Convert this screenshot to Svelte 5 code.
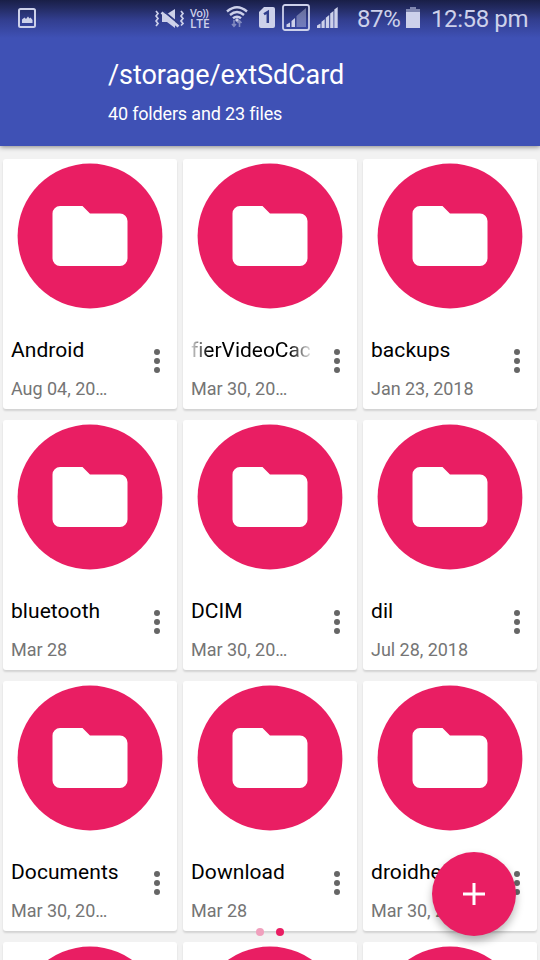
<script>
  const items = [
    { name: 'Android', date: 'Aug 04, 20…' },
    { name: 'fierVideoCac', date: 'Mar 30, 20…', scrolling: true },
    { name: 'backups', date: 'Jan 23, 2018' },
    { name: 'bluetooth', date: 'Mar 28' },
    { name: 'DCIM', date: 'Mar 30, 20…' },
    { name: 'dil', date: 'Jul 28, 2018' },
    { name: 'Documents', date: 'Mar 30, 20…' },
    { name: 'Download', date: 'Mar 28' },
    { name: 'droidhen', date: 'Mar 30, 20…' },
    { name: '', date: '' },
    { name: '', date: '' },
    { name: '', date: '' }
  ];
</script>

<div class="screen">
  <header>
    <div class="status">
      <svg class="photo" width="18" height="20" viewBox="0 0 18 20">
        <rect x="1" y="1" width="16" height="18" rx="1.5" fill="none" stroke="currentColor" stroke-width="2" />
        <path d="M4 15v-3.500L6.500 9.500 8 11l2-2.500 1.500 2 1-1L14.500 12v3z" fill="currentColor" />
      </svg>
      <svg class="mute" width="30" height="20" viewBox="0 0 30 20" fill="currentColor">
        <path d="M7 5h5l8-5v19l-8-6H7z" />
        <path d="M9 2.500L24 15" stroke="#303c84" stroke-width="1.800" />
        <path d="M6.500 3.500L23.500 17.500" stroke="currentColor" stroke-width="2.800" />
        <path d="M1 2l2 2.500L1 7l2 2.500L1 12l2 2.500-2 2.500M26 2l2 2.500-2 2.500 2 2.500-2 2.500 2 2.500-2 2" fill="none" stroke="currentColor" stroke-width="1.700" />
      </svg>
      <div class="volte"><span>Vo))</span><span>LTE</span></div>
      <svg class="wifi" width="22" height="23" viewBox="0 0 22 23" fill="none" stroke="currentColor" stroke-width="2.400">
        <path d="M1 5.500Q11-3 21 5.500M4 9Q11 3 18 9M7 12.300Q11 9 15 12.300" />
        <circle cx="11" cy="14" r="1.700" fill="currentColor" stroke="none" />
        <path d="M8 14v6M6 18l2 2.300L10 18M13.500 21v-6M11.500 17l2-2.300 2 2.300" stroke-width="1.600" opacity=".5" />
      </svg>
      <svg class="sim" width="16" height="21" viewBox="0 0 16 21">
        <path d="M5 0h9a2 2 0 0 1 2 2v17a2 2 0 0 1-2 2H2a2 2 0 0 1-2-2V5z" fill="currentColor" />
        <path d="M5 7.300L8.800 5V16" fill="none" stroke="#303e8c" stroke-width="2.500" />
      </svg>
      <svg class="boxed" width="28" height="27" viewBox="0 0 28 27" fill="currentColor">
        <rect x="1" y="1" width="26" height="25" rx="2" fill="none" stroke="currentColor" stroke-width="1.800" />
        <path d="M4.500 20.500l3.500-2V23H4.500zM9.500 17l3.500-3v9H9.500z" />
        <path d="M14.500 12l9.500-8v19h-9.500z" opacity=".4" />
      </svg>
      <svg class="signal" width="21" height="21" viewBox="0 0 21 21" fill="currentColor">
        <path d="M0 18.500l3.500-2V21H0zM4.500 14.800l3.200-2.500V21H4.500zM8.800 10.800L12.200 8v13H8.800zM13.200 6.500l3.300-2.500v17h-3.300zM17.300 2.500L20.700 0v21h-3.400z" />
      </svg>
      <span class="pct">87%</span>
      <svg class="battery" width="14" height="21" viewBox="0 0 14 21">
        <path d="M4 0h6v2h4v3H0V2h4z" fill="#8087b0" />
        <path d="M0 5h14v16H0z" fill="currentColor" />
      </svg>
      <span class="clock">12:58 pm</span>
    </div>
    <h1>/storage/extSdCard</h1>
    <p>40 folders and 23 files</p>
  </header>

  <main>
    {#each items as item}
      <article>
        <svg class="thumb" width="174" height="154" viewBox="0 0 174 154">
          <circle cx="87" cy="77" r="72.400" fill="#e91e63" />
          <path d="M79.500 47H57a7.500 7.500 0 0 0-7.500 7.500v45a7.500 7.500 0 0 0 7.500 7.500h60a7.500 7.500 0 0 0 7.500-7.500V62a7.500 7.500 0 0 0-7.500-7.500H87z" fill="#fff" />
        </svg>
        <div class="info">
          <div class="text">
            <div class="name" class:scrolling={item.scrolling}>{item.name}</div>
            <div class="date">{item.date}</div>
          </div>
          <div class="more"><i></i><i></i><i></i></div>
        </div>
      </article>
    {/each}
  </main>

  <div class="pager"><i></i><i class="on"></i></div>
  <button class="fab" aria-label="Add">
    <svg width="22" height="22" viewBox="0 0 22 22"><path d="M11 0v22M0 11h22" stroke="#fff" stroke-width="3" /></svg>
  </button>
</div>

<style>
  :global(body) { margin: 0; }
  .screen {
    position: relative;
    width: 540px;
    height: 960px;
    overflow: hidden;
    background: #f2f2f2;
    font-family: Roboto, sans-serif;
  }
  header {
    position: relative;
    height: 146px;
    background: linear-gradient(#191f47 0, #232b62 8px, #323e8f 20px, #3f51b5 38px);
    color: #fff;
    box-shadow: 0 1px 5px rgba(0, 0, 0, 0.45);
  }
  .status {
    display: flex;
    align-items: flex-start;
    height: 38px;
    color: #cdd1ea;
  }
  .status svg { flex: none; }
  .photo { margin: 8px 0 0 18px; }
  .mute { margin: 9px 0 0 119px; }
  .volte {
    width: 21px;
    margin: 7px 0 0 5px;
    font-family: "Open Sans", sans-serif;
    font-weight: 600;
    white-space: nowrap;
  }
  .volte span { display: block; font-size: 11px; line-height: 11px; letter-spacing: -0.6px; }
  .volte span:last-child { font-size: 12px; letter-spacing: -0.2px; }
  .wifi { margin: 6px 0 0 15px; }
  .sim { margin: 7px 0 0 11px; }
  .boxed { margin: 4px 0 0 7px; }
  .signal { margin: 7px 0 0 7px; }
  .pct { width: 49px; margin-left: 19px; font-size: 24px; line-height: 38px; letter-spacing: -0.4px; }
  .battery { margin: 7px 0 0 0; }
  .clock { margin-left: 11px; font-size: 24px; line-height: 38px; letter-spacing: -0.4px; white-space: nowrap; }
  h1 {
    margin: 20px 0 0 108px;
    font-size: 27px;
    font-weight: 400;
    line-height: 34px;
    letter-spacing: -0.05px;
  }
  p { margin: 10px 0 0 108px; font-size: 18px; line-height: 24px; letter-spacing: -0.17px; }
  main {
    display: grid;
    grid-template-columns: repeat(3, 174px);
    grid-auto-rows: 250px;
    gap: 11px 6px;
    padding: 13px 3px 0;
  }
  article {
    border-radius: 3px;
    background: #fff;
    box-shadow: 0 2px 2px rgba(0, 0, 0, 0.13);
  }
  .thumb { display: block; }
  .info { display: flex; margin-top: 23px; }
  .text { width: 120px; margin-left: 8px; }
  .name { height: 28px; overflow: hidden; color: #000; font-size: 21px; line-height: 28px; letter-spacing: 0.06px; white-space: nowrap; }
  .scrolling {
    width: 119px;
    letter-spacing: -0.03px;
    mask-image: linear-gradient(90deg, rgba(0, 0, 0, 0.15) 0, #000 18px, #000 98px, rgba(0, 0, 0, 0.1) 120px);
  }
  .date { margin-top: 14px; font-size: 18px; line-height: 22px; letter-spacing: -0.03px; color: #757575; white-space: nowrap; }
  .more { display: flex; flex-direction: column; gap: 3px; margin: 13px 0 0 23px; }
  .more i { width: 6px; height: 6px; border-radius: 50%; background: #666; }
  .pager { position: absolute; left: 256px; top: 928px; display: flex; gap: 12px; }
  .pager i { width: 8px; height: 8px; border-radius: 50%; background: #f0a0bd; }
  .pager .on { background: #e91e63; }
  .fab {
    position: absolute;
    left: 432px;
    top: 852px;
    display: flex;
    align-items: center;
    justify-content: center;
    width: 84px;
    height: 84px;
    padding: 0;
    border: 0;
    border-radius: 50%;
    background: #e91e63;
    box-shadow: 0 5px 8px rgba(0, 0, 0, 0.28);
  }
</style>
